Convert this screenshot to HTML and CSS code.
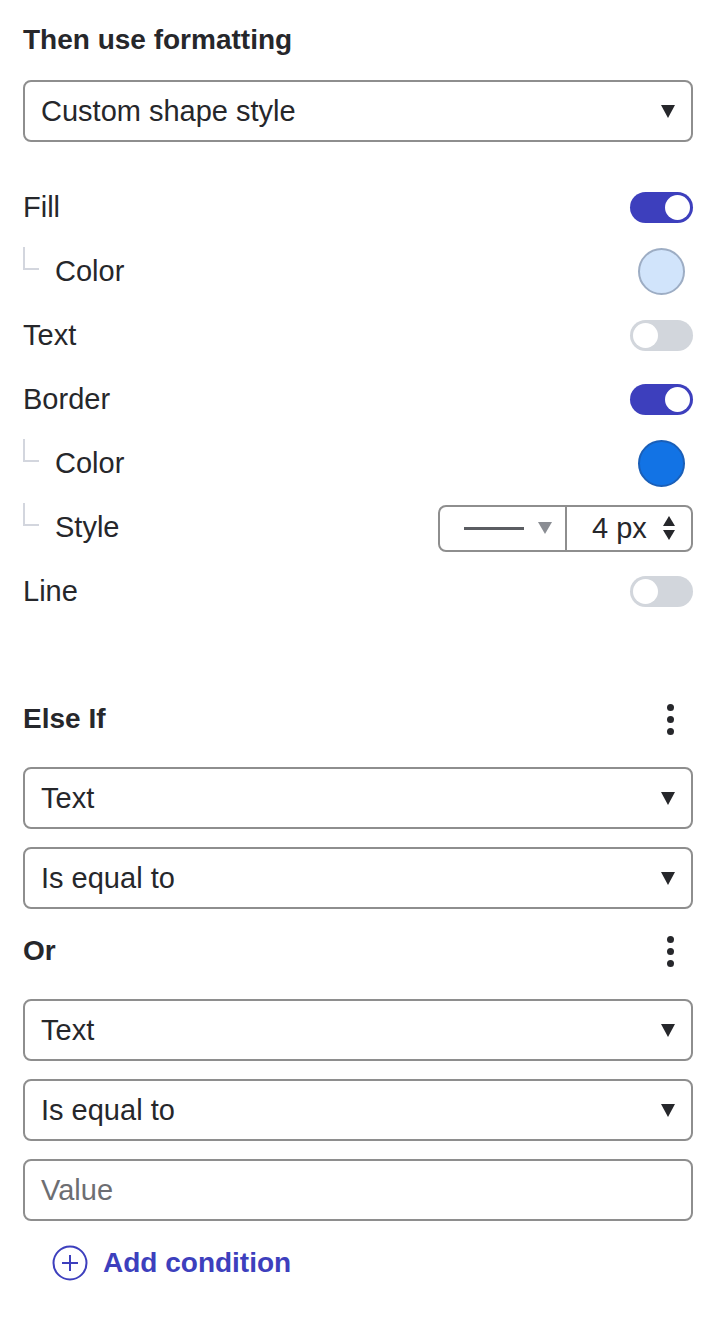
FILE: index.html
```html
<!DOCTYPE html>
<html lang="en">
<head>
<meta charset="utf-8">
<title>Conditional formatting</title>
<link rel="stylesheet" href="styles.css">
</head>
<body>
<div class="panel">
  <h2 class="heading">Then use formatting</h2>
  <div class="select"><span>Custom shape style</span><span class="caret"></span></div>

  <div class="rows">
    <div class="row"><span class="label">Fill</span><span class="toggle on"><span class="knob"></span></span></div>
    <div class="row sub"><span class="tree"></span><span class="label">Color</span><span class="swatch light"></span></div>
    <div class="row"><span class="label">Text</span><span class="toggle"><span class="knob"></span></span></div>
    <div class="row"><span class="label">Border</span><span class="toggle on"><span class="knob"></span></span></div>
    <div class="row sub"><span class="tree"></span><span class="label">Color</span><span class="swatch blue"></span></div>
    <div class="row sub"><span class="tree"></span><span class="label">Style</span>
      <div class="style-ctl">
        <div class="line-pick"><span class="line-sample"></span><span class="caret grey"></span></div>
        <div class="num"><span>4 px</span>
          <span class="spin"><span class="up"></span><span class="down"></span></span>
        </div>
      </div>
    </div>
    <div class="row"><span class="label">Line</span><span class="toggle"><span class="knob"></span></span></div>
  </div>

  <div class="group-head first"><span class="bold">Else If</span><span class="kebab"><i></i><i></i><i></i></span></div>
  <div class="select"><span>Text</span><span class="caret"></span></div>
  <div class="select"><span>Is equal to</span><span class="caret"></span></div>

  <div class="group-head"><span class="bold">Or</span><span class="kebab"><i></i><i></i><i></i></span></div>
  <div class="select"><span>Text</span><span class="caret"></span></div>
  <div class="select"><span>Is equal to</span><span class="caret"></span></div>
  <div class="select input"><span class="placeholder">Value</span></div>

  <div class="add">
    <svg class="plus" width="36" height="36" viewBox="0 0 36 36" aria-hidden="true">
      <circle cx="18" cy="18" r="16.5" fill="none" stroke="#3d3fbd" stroke-width="2"/>
      <path d="M18 10v16M10 18h16" stroke="#3d3fbd" stroke-width="2" fill="none"/>
    </svg>
    <span>Add condition</span>
  </div>
</div>
</body>
</html>
```

FILE: styles.css
```css
html, body {
  margin: 0;
  padding: 0;
  background: #ffffff;
}

body {
  font-family: "Liberation Sans", Arial, sans-serif;
  color: #26272b;
}

.panel {
  padding: 22px 21px 40px 23px;
  width: 670px;
}

.heading {
  margin: 0;
  font-size: 28px;
  font-weight: 700;
  line-height: 36px;
  color: #26272b;
}

.select {
  box-sizing: border-box;
  height: 62px;
  border: 2px solid #8e8e8e;
  border-radius: 8px;
  display: flex;
  align-items: center;
  justify-content: space-between;
  padding: 0 16px 0 16px;
  font-size: 29px;
  margin-top: 18px;
}

.heading + .select {
  margin-top: 22px;
}

.caret {
  width: 0;
  height: 0;
  border-left: 7px solid transparent;
  border-right: 7px solid transparent;
  border-top: 13px solid #26272b;
}

.caret.grey {
  border-top-color: #8a8d93;
  border-left-width: 7px;
  border-right-width: 7px;
  border-top-width: 12px;
}

.rows {
  margin-top: 33px;
}

.row {
  height: 64px;
  display: flex;
  align-items: center;
  font-size: 29px;
  position: relative;
}

.row .label {
  flex: 1;
}

.row.sub .label {
  padding-left: 32px;
}

.tree {
  position: absolute;
  left: 0;
  top: 8px;
  width: 14px;
  height: 21px;
  border-left: 2px solid #d3d6de;
  border-bottom: 2px solid #d3d6de;
}

.toggle {
  box-sizing: border-box;
  width: 63px;
  height: 31px;
  border-radius: 16px;
  background: #d2d6dc;
  display: flex;
  align-items: center;
  padding: 0 3px;
}

.toggle.on {
  background: #3d3fbd;
  justify-content: flex-end;
}

.knob {
  width: 25px;
  height: 25px;
  border-radius: 50%;
  background: #ffffff;
}

.swatch {
  box-sizing: border-box;
  width: 47px;
  height: 47px;
  border-radius: 50%;
  margin-right: 8px;
}

.swatch.light {
  background: #d1e4fb;
  border: 2px solid #9dadc4;
}

.swatch.blue {
  background: #1273e5;
  border: 2px solid #1a5fb8;
}

.style-ctl {
  box-sizing: border-box;
  width: 255px;
  height: 47px;
  border: 2px solid #8e8e8e;
  border-radius: 8px;
  display: flex;
  align-items: stretch;
  margin-top: 2px;
}

.line-pick {
  width: 127px;
  border-right: 2px solid #8e8e8e;
  display: flex;
  align-items: center;
  padding-left: 24px;
  gap: 14px;
  box-sizing: border-box;
}

.line-sample {
  width: 60px;
  height: 3px;
  background: #5b5d62;
}

.num {
  flex: 1;
  display: flex;
  align-items: center;
  justify-content: space-between;
  padding: 0 16px 0 25px;
  font-size: 29px;
}

.spin {
  display: flex;
  flex-direction: column;
  gap: 4px;
}

.spin .up, .spin .down {
  width: 0;
  height: 0;
  border-left: 6px solid transparent;
  border-right: 6px solid transparent;
}

.spin .up {
  border-bottom: 10px solid #26272b;
}

.spin .down {
  border-top: 10px solid #26272b;
}

.group-head {
  display: flex;
  align-items: center;
  justify-content: space-between;
  height: 40px;
  margin-top: 22px;
}

.group-head.first {
  margin-top: 76px;
}

.group-head + .select {
  margin-top: 28px;
}

.bold {
  font-size: 28px;
  font-weight: 700;
}

.kebab {
  display: flex;
  flex-direction: column;
  align-items: center;
  gap: 5px;
  width: 8px;
  margin-right: 19px;
}

.kebab i {
  display: block;
  width: 7px;
  height: 7px;
  border-radius: 50%;
  background: #26272b;
}

.placeholder {
  color: #6d6e72;
}

.add {
  display: flex;
  align-items: center;
  gap: 15px;
  margin-top: 24px;
  padding-left: 29px;
  color: #3d3fbd;
  font-size: 28px;
  font-weight: 700;
}
```
